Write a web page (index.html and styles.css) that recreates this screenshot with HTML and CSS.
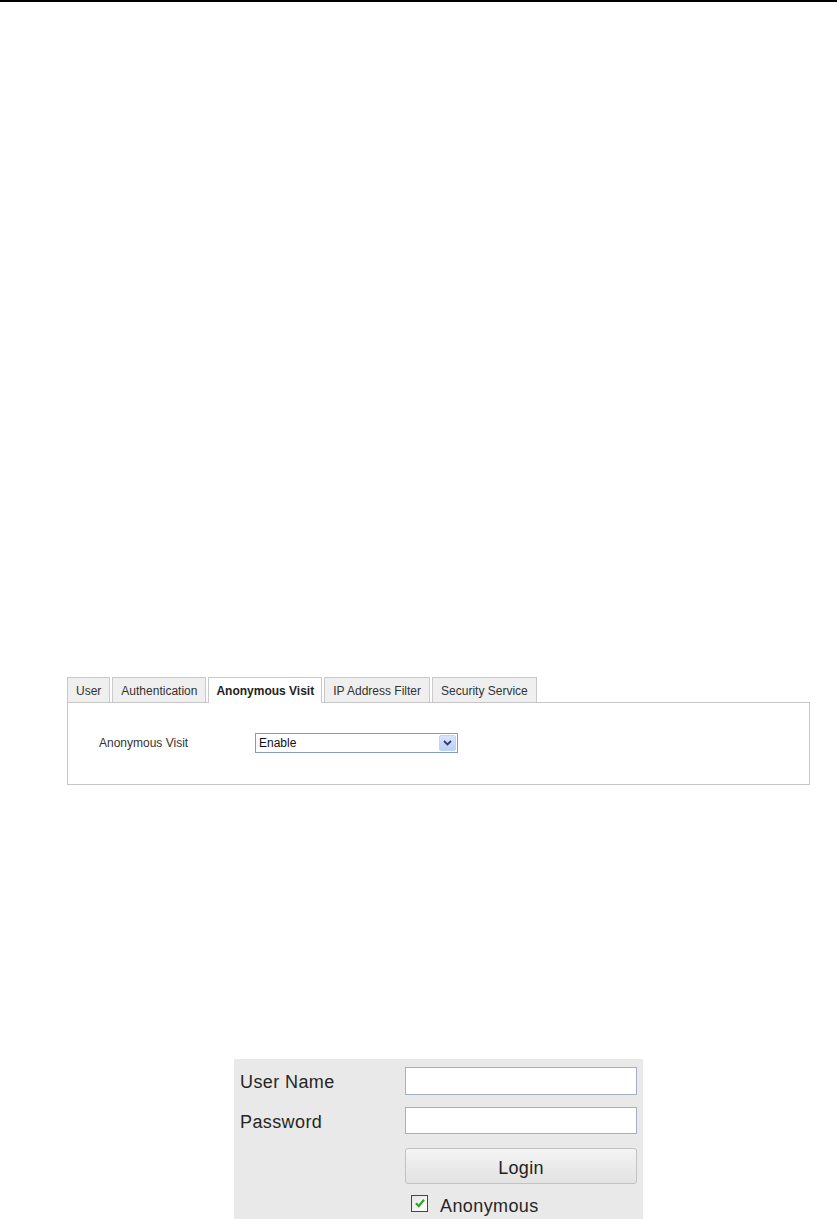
FILE: index.html
```html
<!DOCTYPE html>
<html lang="en">
<head>
<meta charset="utf-8">
<title>Anonymous Visit</title>
<link rel="stylesheet" href="styles.css">
</head>
<body>
<div class="rule"></div>

<section class="settings">
  <div class="tabs">
    <div class="tab">User</div>
    <div class="tab">Authentication</div>
    <div class="tab active">Anonymous Visit</div>
    <div class="tab">IP Address Filter</div>
    <div class="tab">Security Service</div>
  </div>
  <div class="panel">
    <div class="field-row">
      <span class="field-label">Anonymous Visit</span>
      <div class="select">
        <span class="select-value">Enable</span>
        <span class="select-btn">
          <svg width="9" height="6" viewBox="0 0 9 6"><path d="M1 1 L4.5 4.5 L8 1" fill="none" stroke="#2b3f6b" stroke-width="1.8"/></svg>
        </span>
      </div>
    </div>
  </div>
</section>

<section class="login">
  <div class="login-grid">
    <label class="login-label">User Name</label>
    <div class="input"></div>
    <label class="login-label">Password</label>
    <div class="input input-2"></div>
    <div></div>
    <div class="button">Login</div>
    <div></div>
    <div class="check-row">
      <span class="checkbox">
        <svg width="12" height="12" viewBox="0 0 12 12"><path d="M2 6.2 L4.8 9 L10 2.8" fill="none" stroke="#2fa52f" stroke-width="2.2"/></svg>
      </span>
      <span class="check-text">Anonymous</span>
    </div>
  </div>
</section>
</body>
</html>
```

FILE: styles.css
```css
html, body {
  margin: 0;
  padding: 0;
  background: #ffffff;
}

body {
  font-family: "Liberation Sans", Arial, sans-serif;
  color: #333333;
}

.rule {
  height: 2px;
  background: #000000;
}

.settings {
  margin-top: 675px;
  margin-left: 67px;
  width: 743px;
}

.tabs {
  display: flex;
  gap: 2px;
  align-items: flex-end;
}

.tab {
  box-sizing: border-box;
  height: 25px;
  padding: 1px 8px 0;
  line-height: 24px;
  font-size: 12px;
  color: #333333;
  background: #efefef;
  border: 1px solid #c9c9c9;
  border-bottom: none;
  white-space: nowrap;
}

.tab.active {
  height: 26px;
  margin-bottom: -1px;
  background: #ffffff;
  font-weight: bold;
  color: #222222;
  position: relative;
  z-index: 1;
  padding: 1px 7px 0;
}

.panel {
  box-sizing: border-box;
  height: 83px;
  border: 1px solid #c6c6c6;
  padding: 30px 0 0 31px;
}

.field-row {
  display: grid;
  grid-template-columns: 156px 203px;
  align-items: center;
  height: 20px;
}

.field-label {
  font-size: 12px;
  color: #333333;
}

.select {
  box-sizing: border-box;
  height: 20px;
  border: 1px solid #7f9db9;
  display: flex;
  align-items: center;
  justify-content: space-between;
  padding-left: 3px;
  padding-right: 1px;
  background: #ffffff;
}

.select-value {
  font-size: 12px;
  color: #111111;
}

.select-btn {
  box-sizing: border-box;
  width: 17px;
  height: 16px;
  display: flex;
  align-items: center;
  justify-content: center;
  background: linear-gradient(#d9e5fd, #bccff8);
  border: 1px solid #c3d3f5;
  border-radius: 2px;
}

.login {
  margin-top: 274px;
  margin-left: 234px;
  width: 409px;
  height: 160px;
  background: #e9e9e9;
  box-sizing: border-box;
  padding: 8px 0 0 6px;
}

.login-grid {
  display: grid;
  grid-template-columns: 165px 232px;
  grid-template-rows: 28px 27px 36px 17px;
  row-gap: 12px;
  align-items: center;
}

.login-grid > :nth-child(5),
.login-grid > :nth-child(6) {
  margin-top: 3px;
}

.login-label {
  font-size: 18px;
  letter-spacing: 0.4px;
  color: #262626;
  padding-top: 3px;
}

.input {
  box-sizing: border-box;
  height: 28px;
  background: #ffffff;
  border: 1px solid #a2b0c2;
}

.input-2 {
  height: 27px;
}

.button {
  box-sizing: border-box;
  height: 36px;
  border: 1px solid #c2c2c2;
  border-radius: 3px;
  background: linear-gradient(#f4f4f4, #e2e2e2);
  display: flex;
  align-items: center;
  justify-content: center;
  padding-top: 6px;
  font-size: 18px;
  letter-spacing: 0.3px;
  color: #222222;
}

.check-row {
  display: flex;
  align-items: center;
  gap: 12px;
  padding-left: 6px;
  margin-top: 1px;
}

.checkbox {
  box-sizing: border-box;
  width: 17px;
  height: 17px;
  border: 1px solid #1f4f7a;
  background: linear-gradient(135deg, #e4e4e0, #ffffff);
  display: flex;
  align-items: center;
  justify-content: center;
}

.check-text {
  font-size: 18px;
  letter-spacing: 0.4px;
  color: #262626;
  padding-top: 6px;
}
```
